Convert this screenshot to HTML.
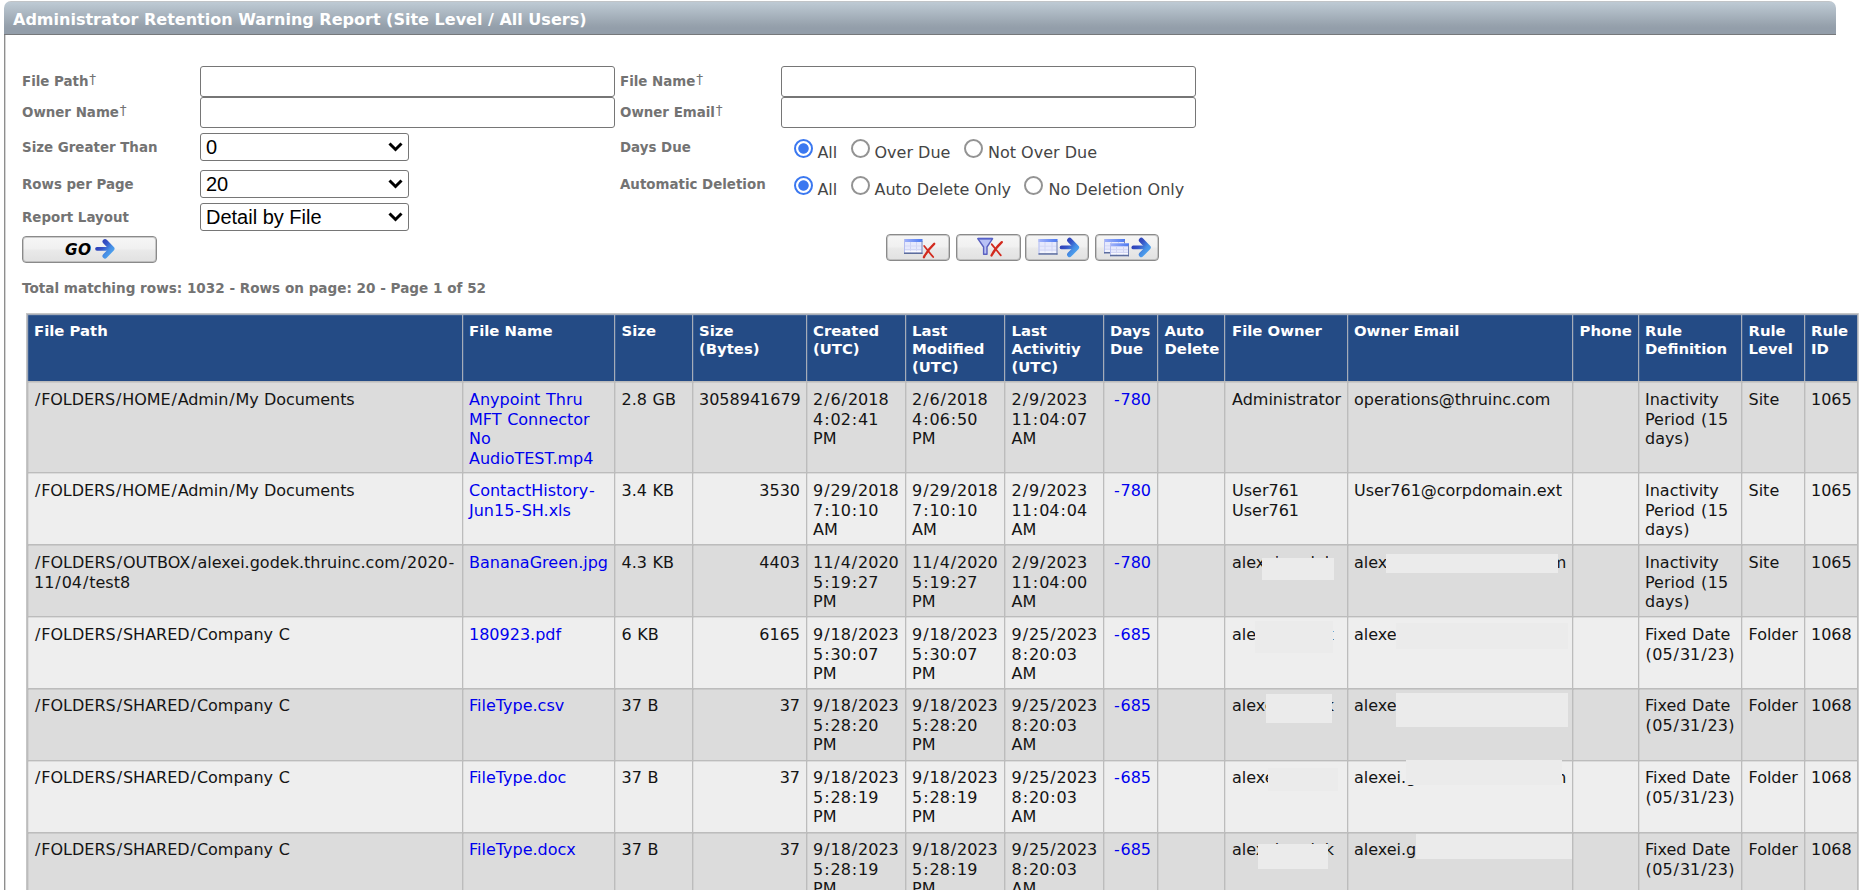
<!DOCTYPE html>
<html lang="en"><head><meta charset="utf-8"><title>Administrator Retention Warning Report</title>
<style>
html,body{margin:0;padding:0;background:#fff;}
body{width:1860px;height:890px;overflow:hidden;position:relative;font-family:"DejaVu Sans","Liberation Sans",sans-serif;font-size:16.25px;color:#000;}
#hdr{position:absolute;left:4px;top:1px;width:1832px;height:34px;box-sizing:border-box;border-radius:7px 7px 0 0;background:linear-gradient(#c1c4c7 0px,#c1c4c7 1px,#bdc9d3 1.5px,#bbc7d1 3px,#97a2ad 24px,#939eaa 27px,#939eaa 33px);border-bottom:1px solid #76787b;color:#fff;font-weight:bold;font-size:16.03px;line-height:37.5px;overflow:hidden;padding-left:9px;white-space:nowrap;}
#lb{position:absolute;left:4px;top:35px;width:2px;height:855px;background:linear-gradient(90deg,#8e8e8e 0,#8e8e8e 1px,#d4d4d4 1px);}
.lbl{position:absolute;font-weight:bold;font-size:13.4px;color:#737373;white-space:nowrap;line-height:18px;}
.lbl sup{font-weight:normal;font-size:13.6px;line-height:1;vertical-align:baseline;position:relative;top:-2.2px;margin-left:0.8px;}
.txt{position:absolute;box-sizing:border-box;border:1px solid #767676;border-radius:3px;background:#fff;height:31px;width:415px;margin:0;padding:0 4px;outline:none;-webkit-appearance:none;appearance:none;font:16px "Liberation Sans",sans-serif;}
.selw{position:absolute;display:block;width:209px;height:28px;}
.sel{display:block;box-sizing:border-box;border:1px solid #767676;border-radius:3px;background:#fff;height:28px;width:209px;margin:0;padding:0 0 0 5px;outline:none;-webkit-appearance:none;appearance:none;font-family:"Liberation Sans",sans-serif;font-size:20px;line-height:26px;color:#000;white-space:nowrap;}
.selw svg{position:absolute;right:6px;top:9px;pointer-events:none;}
.rad{position:absolute;box-sizing:border-box;width:19px;height:19px;margin:0;padding:0;outline:none;-webkit-appearance:none;appearance:none;border:2px solid #939393;border-radius:50%;background:#fff;}
.rad:checked{border:2px solid #3b78f0;background:radial-gradient(circle at 50% 50%,#3b78f0 0,#3b78f0 4.8px,#fff 5.6px);}
.rl{position:absolute;font-size:16px;color:#454545;white-space:nowrap;line-height:20px;}
.btn{position:absolute;box-sizing:border-box;margin:0;padding:0;outline:none;-webkit-appearance:none;appearance:none;border:1px solid #8a8a8a;border-radius:4px;box-shadow:inset 0 0 0 1px rgba(150,150,150,0.45);background:linear-gradient(#f6f6f6 0,#f1f1f1 45%,#e9e9e9 55%,#e1e1e1 100%);height:27px;}
.btn svg{position:absolute;left:0;top:0;overflow:visible;}
.btn .go{position:absolute;left:42px;top:3px;letter-spacing:0.3px;font:italic bold 15.4px/20px "DejaVu Sans","Liberation Sans",sans-serif;color:#000;}
table.grid{position:absolute;left:27px;top:314px;border-collapse:collapse;table-layout:fixed;width:1831px;}
table.grid th,table.grid td{border:1px solid #bcbcbc;padding:6px 6px 0 6px;box-shadow:inset 1px 0 0 0 rgba(0,0,0,0.06), inset 0 1px 0 0 rgba(0,0,0,0.08);vertical-align:top;text-align:left;overflow:visible;}
table.grid th{box-shadow:inset 1px 0 0 0 rgba(255,255,255,0.12), inset 0 1px 0 0 rgba(255,255,255,0.10);background:#244b85;color:#fff;font-weight:bold;font-size:14.85px;line-height:18px;border-color:#a5acb8;border-bottom-color:#bcbcbc;height:59px;padding-top:7px;}
table.grid td{font-size:16px;line-height:19.5px;white-space:nowrap;padding-top:8px;color:#141414;}
table.grid tr:nth-child(n+6) td{padding-top:7px;}
tr.a td{background:#dcdcdc;}
tr.b td{background:#eeeeee;}
td.r,td.c{text-align:right !important;}
td.em{letter-spacing:-0.03px;}

td a{color:#0000ee;}
.patch{position:absolute;background:#ebebeb;}

#ol{position:absolute;left:26px;top:313px;width:1px;height:577px;background:#c6c6c6;}
#ot{position:absolute;left:26px;top:313px;width:1833px;height:1px;background:#c6c6c6;}
#or{position:absolute;left:1858px;top:313px;width:1px;height:577px;background:#cfcfcf;}
.tot{font-size:13.58px !important;}
table.grid tr>*:nth-child(7),table.grid tr>*:nth-child(9),table.grid tr>*:nth-child(12),table.grid tr>*:nth-child(14){padding-left:6.5px;}
table.grid tr>*:nth-child(10){padding-left:7px;}
table.grid tr>*:nth-child(3){padding-left:6.5px;}
td span.s{margin:0 0.95px;}
td span.d{margin:0 0.75px;}
td span.p{margin:0 0.5px;}
table.grid td{word-spacing:0.55px;}
table.grid td.p1{letter-spacing:-0.08px;}
td .gap{display:inline-block;height:1px;}

</style></head>
<body>
<div id="hdr">Administrator Retention Warning Report (Site Level / All Users)</div>
<div id="lb"></div>
<div class="lbl" style="left:22px;top:73px">File Path<sup>†</sup></div>
<div class="lbl" style="left:22px;top:104px">Owner Name<sup>†</sup></div>
<div class="lbl" style="left:22px;top:139px">Size Greater Than</div>
<div class="lbl" style="left:22px;top:176px">Rows per Page</div>
<div class="lbl" style="left:22px;top:209px">Report Layout</div>
<input type="text" class="txt" style="left:200px;top:66px">
<input type="text" class="txt" style="left:200px;top:97px">
<span class="selw" style="left:200px;top:133px"><select class="sel"><option selected>0</option></select><svg width="15" height="10" viewBox="0 0 15 10"><path d="M1.5 1.5 L7.5 7.5 L13.5 1.5" fill="none" stroke="#000" stroke-width="3"/></svg></span>
<span class="selw" style="left:200px;top:170px"><select class="sel"><option selected>20</option></select><svg width="15" height="10" viewBox="0 0 15 10"><path d="M1.5 1.5 L7.5 7.5 L13.5 1.5" fill="none" stroke="#000" stroke-width="3"/></svg></span>
<span class="selw" style="left:200px;top:203px"><select class="sel"><option selected>Detail by File</option></select><svg width="15" height="10" viewBox="0 0 15 10"><path d="M1.5 1.5 L7.5 7.5 L13.5 1.5" fill="none" stroke="#000" stroke-width="3"/></svg></span>
<div class="lbl" style="left:620px;top:73px">File Name<sup>†</sup></div>
<div class="lbl" style="left:620px;top:104px">Owner Email<sup>†</sup></div>
<div class="lbl" style="left:620px;top:139px">Days Due</div>
<div class="lbl" style="left:620px;top:176px">Automatic Deletion</div>
<input type="text" class="txt" style="left:781px;top:66px">
<input type="text" class="txt" style="left:781px;top:97px">
<input type="radio" name="due" id="r1" class="rad" checked style="left:793.5px;top:139.0px"><label class="rl" for="r1" style="left:817.4px;top:142.8px">All</label>
<input type="radio" name="due" id="r2" class="rad" style="left:850.5px;top:139.0px"><label class="rl" for="r2" style="left:874.5px;top:142.8px">Over Due</label>
<input type="radio" name="due" id="r3" class="rad" style="left:963.8px;top:139.0px"><label class="rl" for="r3" style="left:988px;top:142.8px">Not Over Due</label>
<input type="radio" name="del" id="r4" class="rad" checked style="left:793.5px;top:176px"><label class="rl" for="r4" style="left:817.4px;top:180.3px">All</label>
<input type="radio" name="del" id="r5" class="rad" style="left:850.5px;top:176px"><label class="rl" for="r5" style="left:874.5px;top:180.3px">Auto Delete Only</label>
<input type="radio" name="del" id="r6" class="rad" style="left:1023.5px;top:176px"><label class="rl" for="r6" style="left:1048.5px;top:180.3px">No Deletion Only</label>
<button type="button" class="btn" style="left:22px;top:236px;width:134.5px"><span class="go">GO</span><svg width="135" height="27" viewBox="23 237 135 27"><defs><linearGradient id="g0" gradientUnits="userSpaceOnUse" x1="2" y1="3" x2="18" y2="16"><stop offset="0" stop-color="#2b36ad"/><stop offset="0.4" stop-color="#3552c6"/><stop offset="0.7" stop-color="#468ee4"/><stop offset="1" stop-color="#4fa8f2"/></linearGradient><linearGradient id="g0h" x1="0" y1="0" x2="1" y2="0"><stop offset="0" stop-color="#a3b3fb"/><stop offset="1" stop-color="#4c79f1"/></linearGradient></defs><g transform="translate(95,238.6)" fill="none" stroke="url(#g0)" stroke-linecap="round" stroke-linejoin="round"><path d="M2 10.2 H13" stroke-width="3.7"/><path d="M10 3 L17 10.2 L10 17.4" stroke-width="5"/></g></svg></button>
<button type="button" class="btn" style="left:886px;top:234px;width:64px;height:27px"><svg width="64" height="27" viewBox="887 235 64 27"><defs><linearGradient id="g1" gradientUnits="userSpaceOnUse" x1="2" y1="3" x2="18" y2="16"><stop offset="0" stop-color="#2b36ad"/><stop offset="0.4" stop-color="#3552c6"/><stop offset="0.7" stop-color="#468ee4"/><stop offset="1" stop-color="#4fa8f2"/></linearGradient><linearGradient id="g1h" x1="0" y1="0" x2="1" y2="0"><stop offset="0" stop-color="#a3b3fb"/><stop offset="1" stop-color="#4c79f1"/></linearGradient></defs><g transform="translate(904,239)"><rect x="0" y="0" width="18.5" height="15" fill="#e6e9fd"/><rect x="0" y="0" width="18.5" height="3" fill="url(#g1h)"/><rect x="6" y="3" width="1" height="10.5" fill="#cfd3f3"/><rect x="12" y="3" width="1" height="10.5" fill="#cfd3f3"/><rect x="1" y="6.5" width="16.5" height="1" fill="#d3d7f5"/><rect x="1" y="10.0" width="16.5" height="1" fill="#d3d7f5"/><rect x="1" y="11.8" width="16.5" height="1.2" fill="#ffffff" opacity="0.8"/><rect x="0" y="0" width="1" height="15" fill="#b4bdf0"/><rect x="17.5" y="2" width="1" height="13" fill="#7484b6"/><rect x="0" y="13.5" width="18.5" height="1.5" fill="#5c6d9c"/></g><g transform="translate(922.7,243)" fill="none" stroke="#d22a1e" stroke-linecap="round"><path d="M1.5 3 C4 6 7 10 10.5 14" stroke-width="1.8"/><path d="M11.5 0.8 C7.5 4.5 3.5 9.5 1.2 14.2" stroke-width="2.3"/></g></svg></button>
<button type="button" class="btn" style="left:956px;top:234px;width:65px;height:27px"><svg width="65" height="27" viewBox="957 235 65 27"><g transform="translate(977,237.8)"><path d="M0.8 0.8 H15.6 L10 9.2 V16.4 H6.6 V9.2 Z" fill="#b9c2f6" stroke="#5a60c0" stroke-width="1.4" stroke-linejoin="round"/><path d="M0.8 0.8 H15.6" stroke="#5560c8" stroke-width="1.8"/></g><g transform="translate(990.3,241.3)" fill="none" stroke="#d22a1e" stroke-linecap="round"><path d="M1.5 3 C4 6 7 10 10.5 14" stroke-width="1.8"/><path d="M11.5 0.8 C7.5 4.5 3.5 9.5 1.2 14.2" stroke-width="2.3"/></g></svg></button>
<button type="button" class="btn" style="left:1025px;top:234px;width:64px;height:27px"><svg width="64" height="27" viewBox="1026 235 64 27"><defs><linearGradient id="g3" gradientUnits="userSpaceOnUse" x1="2" y1="3" x2="18" y2="16"><stop offset="0" stop-color="#2b36ad"/><stop offset="0.4" stop-color="#3552c6"/><stop offset="0.7" stop-color="#468ee4"/><stop offset="1" stop-color="#4fa8f2"/></linearGradient><linearGradient id="g3h" x1="0" y1="0" x2="1" y2="0"><stop offset="0" stop-color="#a3b3fb"/><stop offset="1" stop-color="#4c79f1"/></linearGradient></defs><g transform="translate(1038.5,239)"><rect x="0" y="0" width="19" height="15.7" fill="#e6e9fd"/><rect x="0" y="0" width="19" height="3" fill="url(#g3h)"/><rect x="6" y="3" width="1" height="11.2" fill="#cfd3f3"/><rect x="13" y="3" width="1" height="11.2" fill="#cfd3f3"/><rect x="1" y="6.7" width="17" height="1" fill="#d3d7f5"/><rect x="1" y="10.5" width="17" height="1" fill="#d3d7f5"/><rect x="1" y="12.5" width="17" height="1.2" fill="#ffffff" opacity="0.8"/><rect x="0" y="0" width="1" height="15.7" fill="#b4bdf0"/><rect x="18" y="2" width="1" height="13.7" fill="#7484b6"/><rect x="0" y="14.2" width="19" height="1.5" fill="#5c6d9c"/></g><g transform="translate(1059.6,237.2)" fill="none" stroke="url(#g3)" stroke-linecap="round" stroke-linejoin="round"><path d="M2 10.2 H13" stroke-width="3.7"/><path d="M10 3 L17 10.2 L10 17.4" stroke-width="5"/></g></svg></button>
<button type="button" class="btn" style="left:1095px;top:234px;width:64px;height:27px"><svg width="64" height="27" viewBox="1096 235 64 27"><defs><linearGradient id="g4" gradientUnits="userSpaceOnUse" x1="2" y1="3" x2="18" y2="16"><stop offset="0" stop-color="#2b36ad"/><stop offset="0.4" stop-color="#3552c6"/><stop offset="0.7" stop-color="#468ee4"/><stop offset="1" stop-color="#4fa8f2"/></linearGradient><linearGradient id="g4h" x1="0" y1="0" x2="1" y2="0"><stop offset="0" stop-color="#a3b3fb"/><stop offset="1" stop-color="#4c79f1"/></linearGradient></defs><g transform="translate(1104,239)"><rect x="0" y="0" width="21" height="14.5" fill="#e6e9fd"/><rect x="0" y="0" width="21" height="3" fill="url(#g4h)"/><rect x="7" y="3" width="1" height="10.0" fill="#cfd3f3"/><rect x="14" y="3" width="1" height="10.0" fill="#cfd3f3"/><rect x="1" y="6.3" width="19" height="1" fill="#d3d7f5"/><rect x="1" y="9.7" width="19" height="1" fill="#d3d7f5"/><rect x="1" y="11.3" width="19" height="1.2" fill="#ffffff" opacity="0.8"/><rect x="0" y="0" width="1" height="14.5" fill="#b4bdf0"/><rect x="20" y="2" width="1" height="12.5" fill="#7484b6"/><rect x="0" y="13.0" width="21" height="1.5" fill="#5c6d9c"/></g><g transform="translate(1110,243.3)"><rect x="0" y="0" width="19" height="13" fill="#e6e9fd"/><rect x="0" y="0" width="19" height="3" fill="url(#g4h)"/><rect x="6" y="3" width="1" height="8.5" fill="#cfd3f3"/><rect x="13" y="3" width="1" height="8.5" fill="#cfd3f3"/><rect x="1" y="5.8" width="17" height="1" fill="#d3d7f5"/><rect x="1" y="8.7" width="17" height="1" fill="#d3d7f5"/><rect x="1" y="9.8" width="17" height="1.2" fill="#ffffff" opacity="0.8"/><rect x="0" y="0" width="1" height="13" fill="#b4bdf0"/><rect x="18" y="2" width="1" height="11" fill="#7484b6"/><rect x="0" y="11.5" width="19" height="1.5" fill="#5c6d9c"/></g><g transform="translate(1131.3,237.2)" fill="none" stroke="url(#g4)" stroke-linecap="round" stroke-linejoin="round"><path d="M2 10.2 H13" stroke-width="3.7"/><path d="M10 3 L17 10.2 L10 17.4" stroke-width="5"/></g></svg></button>
<div class="lbl tot" style="left:22px;top:279px">Total matching rows: 1032 - Rows on page: 20 - Page 1 of 52</div>
<div id="ol"></div><div id="ot"></div><div id="or"></div>
<table class="grid" cellspacing="0">
<colgroup><col style="width:435px"><col style="width:152px"><col style="width:78px"><col style="width:114px"><col style="width:99px"><col style="width:99px"><col style="width:99px"><col style="width:54px"><col style="width:67px"><col style="width:123px"><col style="width:225px"><col style="width:66px"><col style="width:103px"><col style="width:63px"><col style="width:53px"></colgroup>
<tr class="hd"><th>File Path</th><th>File Name</th><th>Size</th><th>Size<br>(Bytes)</th><th>Created<br>(UTC)</th><th>Last<br>Modified<br>(UTC)</th><th>Last<br>Activitiy<br>(UTC)</th><th>Days<br>Due</th><th>Auto<br>Delete</th><th>File Owner</th><th>Owner Email</th><th>Phone</th><th>Rule<br>Definition</th><th>Rule<br>Level</th><th>Rule<br>ID</th></tr>
<tr class="a" style="height:91px"><td class="p1"><span class="s">/</span>FOLDERS<span class="s">/</span>HOME<span class="s">/</span>Admin<span class="s">/</span>My Documents</td><td><a>Anypoint Thru<br>MFT Connector<br>No<br>AudioTEST.mp4</a></td><td>2.8 GB</td><td class="r">3058941679</td><td>2<span class="s">/</span>6<span class="s">/</span>2018<br>4<span class="s">:</span>02<span class="s">:</span>41<br>PM</td><td>2<span class="s">/</span>6<span class="s">/</span>2018<br>4<span class="s">:</span>06<span class="s">:</span>50<br>PM</td><td>2<span class="s">/</span>9<span class="s">/</span>2023<br>11<span class="s">:</span>04<span class="s">:</span>07<br>AM</td><td class="c"><a><span class="d">-</span>780</a></td><td></td><td>Administrator</td><td class="em">operations@thruinc.com</td><td></td><td>Inactivity<br>Period <span class="p">(</span>15<br>days<span class="p">)</span></td><td>Site</td><td>1065</td></tr>
<tr class="b" style="height:72px"><td class="p1"><span class="s">/</span>FOLDERS<span class="s">/</span>HOME<span class="s">/</span>Admin<span class="s">/</span>My Documents</td><td><a>ContactHistory<span class="d">-</span><br>Jun15<span class="d">-</span>SH.xls</a></td><td>3.4 KB</td><td class="r">3530</td><td>9<span class="s">/</span>29<span class="s">/</span>2018<br>7<span class="s">:</span>10<span class="s">:</span>10<br>AM</td><td>9<span class="s">/</span>29<span class="s">/</span>2018<br>7<span class="s">:</span>10<span class="s">:</span>10<br>AM</td><td>2<span class="s">/</span>9<span class="s">/</span>2023<br>11<span class="s">:</span>04<span class="s">:</span>04<br>AM</td><td class="c"><a><span class="d">-</span>780</a></td><td></td><td>User761<br>User761</td><td class="em">User761@corpdomain.ext</td><td></td><td>Inactivity<br>Period <span class="p">(</span>15<br>days<span class="p">)</span></td><td>Site</td><td>1065</td></tr>
<tr class="a" style="height:72px"><td><span class="s">/</span>FOLDERS<span class="s">/</span>OUTBOX<span class="s">/</span>alexei.godek.thruinc.com<span class="s">/</span>2020<span class="d">-</span><br>11<span class="s">/</span>04<span class="s">/</span>test8</td><td><a>BananaGreen.jpg</a></td><td>4.3 KB</td><td class="r">4403</td><td>11<span class="s">/</span>4<span class="s">/</span>2020<br>5<span class="s">:</span>19<span class="s">:</span>27<br>PM</td><td>11<span class="s">/</span>4<span class="s">/</span>2020<br>5<span class="s">:</span>19<span class="s">:</span>27<br>PM</td><td>2<span class="s">/</span>9<span class="s">/</span>2023<br>11<span class="s">:</span>04<span class="s">:</span>00<br>AM</td><td class="c"><a><span class="d">-</span>780</a></td><td></td><td>alex</td><td class="em">alex<span class="gap" style="width:163.7px"></span>m</td><td></td><td>Inactivity<br>Period <span class="p">(</span>15<br>days<span class="p">)</span></td><td>Site</td><td>1065</td></tr>
<tr class="b" style="height:72px"><td><span class="s">/</span>FOLDERS<span class="s">/</span>SHARED<span class="s">/</span>Company C</td><td><a>180923.pdf</a></td><td>6 KB</td><td class="r">6165</td><td>9<span class="s">/</span>18<span class="s">/</span>2023<br>5<span class="s">:</span>30<span class="s">:</span>07<br>PM</td><td>9<span class="s">/</span>18<span class="s">/</span>2023<br>5<span class="s">:</span>30<span class="s">:</span>07<br>PM</td><td>9<span class="s">/</span>25<span class="s">/</span>2023<br>8<span class="s">:</span>20<span class="s">:</span>03<br>AM</td><td class="c"><a><span class="d">-</span>685</a></td><td></td><td>ale</td><td class="em">alexe</td><td></td><td>Fixed Date<br><span class="p">(</span>05<span class="s">/</span>31<span class="s">/</span>23<span class="p">)</span></td><td>Folder</td><td>1068</td></tr>
<tr class="a" style="height:72px"><td><span class="s">/</span>FOLDERS<span class="s">/</span>SHARED<span class="s">/</span>Company C</td><td><a>FileType.csv</a></td><td>37 B</td><td class="r">37</td><td>9<span class="s">/</span>18<span class="s">/</span>2023<br>5<span class="s">:</span>28<span class="s">:</span>20<br>PM</td><td>9<span class="s">/</span>18<span class="s">/</span>2023<br>5<span class="s">:</span>28<span class="s">:</span>20<br>PM</td><td>9<span class="s">/</span>25<span class="s">/</span>2023<br>8<span class="s">:</span>20<span class="s">:</span>03<br>AM</td><td class="c"><a><span class="d">-</span>685</a></td><td></td><td>alexe</td><td class="em">alexe</td><td></td><td>Fixed Date<br><span class="p">(</span>05<span class="s">/</span>31<span class="s">/</span>23<span class="p">)</span></td><td>Folder</td><td>1068</td></tr>
<tr class="b" style="height:72px"><td><span class="s">/</span>FOLDERS<span class="s">/</span>SHARED<span class="s">/</span>Company C</td><td><a>FileType.doc</a></td><td>37 B</td><td class="r">37</td><td>9<span class="s">/</span>18<span class="s">/</span>2023<br>5<span class="s">:</span>28<span class="s">:</span>19<br>PM</td><td>9<span class="s">/</span>18<span class="s">/</span>2023<br>5<span class="s">:</span>28<span class="s">:</span>19<br>PM</td><td>9<span class="s">/</span>25<span class="s">/</span>2023<br>8<span class="s">:</span>20<span class="s">:</span>03<br>AM</td><td class="c"><a><span class="d">-</span>685</a></td><td></td><td>alexe</td><td class="em">alexei.g<span class="gap" style="width:134.77px"></span>m</td><td></td><td>Fixed Date<br><span class="p">(</span>05<span class="s">/</span>31<span class="s">/</span>23<span class="p">)</span></td><td>Folder</td><td>1068</td></tr>
<tr class="a" style="height:72px"><td><span class="s">/</span>FOLDERS<span class="s">/</span>SHARED<span class="s">/</span>Company C</td><td><a>FileType.docx</a></td><td>37 B</td><td class="r">37</td><td>9<span class="s">/</span>18<span class="s">/</span>2023<br>5<span class="s">:</span>28<span class="s">:</span>19<br>PM</td><td>9<span class="s">/</span>18<span class="s">/</span>2023<br>5<span class="s">:</span>28<span class="s">:</span>19<br>PM</td><td>9<span class="s">/</span>25<span class="s">/</span>2023<br>8<span class="s">:</span>20<span class="s">:</span>03<br>AM</td><td class="c"><a><span class="d">-</span>685</a></td><td></td><td>alex<span class="gap" style="width:59.4px"></span>k</td><td class="em">alexei.g</td><td></td><td>Fixed Date<br><span class="p">(</span>05<span class="s">/</span>31<span class="s">/</span>23<span class="p">)</span></td><td>Folder</td><td>1068</td></tr>
</table>
<div class="patch" style="left:1262px;top:558px;width:72px;height:22px"></div>
<div class="patch" style="left:1386px;top:554px;width:172px;height:19px"></div>
<div class="patch" style="left:1255px;top:621px;width:78px;height:32px"></div>
<div class="patch" style="left:1396px;top:623px;width:172px;height:26px"></div>
<div class="patch" style="left:1266px;top:694px;width:66px;height:29px"></div>
<div class="patch" style="left:1396px;top:693px;width:172px;height:34px"></div>
<div class="patch" style="left:1268px;top:768px;width:70px;height:23px"></div>
<div class="patch" style="left:1406px;top:760px;width:156px;height:25px"></div>
<div class="patch" style="left:1258px;top:844px;width:70px;height:25px"></div>
<div class="patch" style="left:1416px;top:834px;width:156px;height:25px"></div>
<svg class="rem" style="position:absolute;left:1275px;top:556px" width="59" height="288" viewBox="0 0 59 288" shape-rendering="crispEdges" aria-hidden="true"><rect x="0" y="0" width="1" height="1" fill="#dcd5bc"/><rect x="1" y="0" width="1" height="1" fill="#8a4620"/><rect x="2" y="0" width="1" height="1" fill="#204c91"/><rect x="3" y="0" width="1" height="1" fill="#c3d5dc"/><rect x="36" y="0" width="1" height="1" fill="#dcc997"/><rect x="37" y="0" width="1" height="1" fill="#52261a"/><rect x="38" y="0" width="1" height="1" fill="#3f7eb6"/><rect x="50" y="0" width="1" height="1" fill="#dcd5b6"/><rect x="51" y="0" width="1" height="1" fill="#7e3f1a"/><rect x="52" y="0" width="1" height="1" fill="#265297"/><rect x="1" y="1" width="1" height="1" fill="#9d6b4c"/><rect x="2" y="1" width="1" height="1" fill="#526ba3"/><rect x="36" y="1" width="1" height="1" fill="#dcc997"/><rect x="37" y="1" width="1" height="1" fill="#52261a"/><rect x="38" y="1" width="1" height="1" fill="#3f7eb6"/><rect x="50" y="1" width="1" height="1" fill="#dcd5b6"/><rect x="51" y="1" width="1" height="1" fill="#7e3f1a"/><rect x="52" y="1" width="1" height="1" fill="#265297"/><rect x="58" y="75" width="1" height="1" fill="#6ca9d2"/><rect x="58" y="83" width="1" height="1" fill="#4a87b7"/><rect x="57" y="146" width="1" height="1" fill="#1a2039"/><rect x="58" y="146" width="1" height="1" fill="#659dc3"/><rect x="57" y="147" width="1" height="1" fill="#7eaac9"/><rect x="57" y="153" width="1" height="1" fill="#467eb0"/><rect x="57" y="154" width="1" height="1" fill="#261420"/><rect x="58" y="154" width="1" height="1" fill="#467eaa"/><rect x="0" y="287" width="1" height="1" fill="#dcd5bc"/><rect x="1" y="287" width="1" height="1" fill="#8a4620"/><rect x="2" y="287" width="1" height="1" fill="#204c91"/><rect x="3" y="287" width="1" height="1" fill="#c3d5dc"/><rect x="36" y="287" width="1" height="1" fill="#dcc997"/><rect x="37" y="287" width="1" height="1" fill="#52261a"/><rect x="38" y="287" width="1" height="1" fill="#3f7eb6"/></svg>
</body></html>
